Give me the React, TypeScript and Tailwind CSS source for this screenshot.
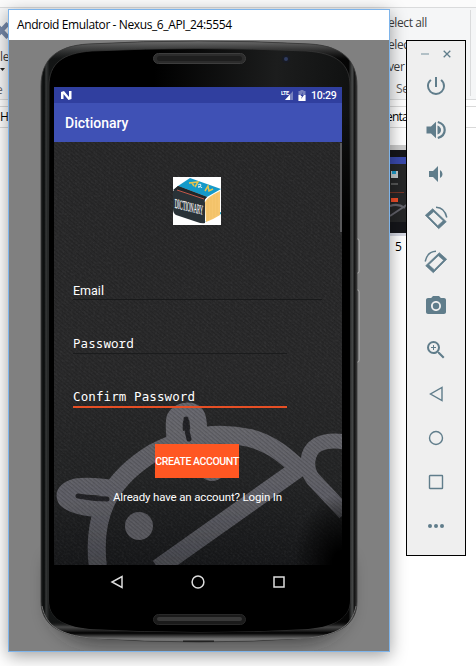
import React from "react";
import { MdPowerSettingsNew, MdVolumeDown, MdPhotoCamera, MdZoomIn } from "react-icons/md";

const ui = "font-['Open_Sans','Noto_Sans',sans-serif]";

function Desktop() {
  return (
    <div className={`relative flex h-[666px] w-[476px] flex-col overflow-hidden bg-white text-[12px] text-[#3c3c3c] ${ui}`}>
      <div className="h-[8px] border-b border-[#dadbdc] bg-[#fbfbfb]" />
      <div className="flex h-[92px] border-b border-[#dadbdc] bg-[#f5f6f7]">
        <div className="flex w-[10px] flex-col leading-[16px]">
          <svg className="mt-[14px] h-[18px] w-[8px] shrink-0" viewBox="0 0 8 18">
            <path d="M-5 1.500L8 15.500M8 1.500L-5 15.500" stroke="#7588a8" strokeWidth="4.500" />
          </svg>
          <span className="mt-[9px] tracking-[-0.3px]">le</span>
          <svg className="mt-[3px] h-[4px] w-[8px] shrink-0" viewBox="0 0 8 4"><path d="M0 0h5L2.5 3z" fill="#222" /></svg>
          <span className="-ml-1 mt-[10px] text-[#6a6a6a]">e</span>
        </div>
        <div className="ml-auto mt-[2px] flex h-[86px] w-[83px] flex-col border-r border-[#dadbdc] tracking-[-0.4px] leading-[22px]">
          <span className="mt-[2px] h-[22px] whitespace-nowrap">elect all</span>
          <span className="h-[22px]">elec</span>
          <span className="h-[22px]">ver</span>
          <span className="ml-[8px] h-[22px] text-[#5a5a5a]">Se</span>
        </div>
        <div className="w-[5px]" />
      </div>
      <div className="mt-[6px] flex h-[22px] items-center justify-between border-y border-[#d9d9d9] bg-white text-black">
        <span>H</span>
        <span className="w-[90px] tracking-[-0.8px]">enta</span>
      </div>
      <div className="ml-[389px] mt-[17px] flex w-[60px] flex-col">
        <svg className="h-[91px] w-[20px]" viewBox="389 145 20 91">
          <rect x="389" y="145" width="20" height="91" fill="#ccc" />
          <rect x="389" y="150" width="20" height="83" fill="#15161a" />
          <rect x="389" y="157" width="20" height="7" fill="#3949ab" />
          <rect x="389" y="164" width="20" height="58" fill="#252627" />
          <rect x="391" y="171" width="7" height="7" fill="#c0c8ca" />
          <rect x="392" y="171" width="4" height="3" fill="#1a9ac8" />
          <path d="M391 184h7" stroke="#888" />
          <path d="M390 192.500h14" stroke="#743526" />
          <rect x="391" y="198" width="7" height="4" fill="#ee4e29" />
          <path d="M390 216L408 204M390 206q8 -3 15 2" fill="none" stroke="#62626a" strokeWidth="2" />
          <rect x="389" y="233" width="20" height="3" fill="#d5d8e2" />
        </svg>
        <span className="ml-[6px] mt-[2px] leading-[18px] text-black">5</span>
      </div>
    </div>
  );
}

const body = "M41 86C41 59 57 46 88 44Q199 38 310 44C341 46 357 59 357 86V602C357 624 339 635 308 638Q199 646 90 638C59 635 41 624 41 602Z";
const face = "M49 86C49 64 62 53 92 51Q199 46 306 51C337 53 350 64 350 86V600C350 617 337 626 308 629Q199 635 90 629C61 626 49 617 49 600Z";

function PhoneShell() {
  return (
    <svg className="absolute left-0 top-0 h-[611px] w-[381px]" viewBox="9 40 381 611">
      <defs>
        <linearGradient id="edge" x1="0" x2="1">
          <stop offset="0" stopColor="#1c1e1e" /><stop offset=".01" stopColor="#090b0b" /><stop offset=".016" stopColor="#353737" /><stop offset=".027" stopColor="#131515" />
          <stop offset=".973" stopColor="#050505" /><stop offset=".985" stopColor="#484a4a" /><stop offset=".992" stopColor="#151515" /><stop offset="1" stopColor="#333" />
        </linearGradient>
        <linearGradient id="gloss" x1="0" x2="1" y1="0" y2=".12">
          <stop offset=".35" stopColor="#000" /><stop offset=".75" stopColor="#1c1d1d" /><stop offset="1" stopColor="#101111" />
        </linearGradient>
        <linearGradient id="gloss2" x1="0" x2="0" y1="0" y2="1">
          <stop offset=".1" stopColor="#000" stopOpacity="0" /><stop offset=".3" stopColor="#000" />
        </linearGradient>
        <linearGradient id="caps" x1="0" x2="0" y1="0" y2="1">
          <stop offset="0" stopColor="#777" stopOpacity=".9" /><stop offset=".03" stopColor="#555" stopOpacity="0" />
          <stop offset=".965" stopColor="#000" stopOpacity="0" /><stop offset=".975" stopColor="#555" stopOpacity=".8" /><stop offset=".985" stopColor="#000" /><stop offset=".995" stopColor="#777" />
        </linearGradient>
        <filter id="soft" x="-20%" y="-20%" width="140%" height="140%"><feGaussianBlur stdDeviation="9" /></filter>
      </defs>
      <path d="M50 560H348V610Q340 640 300 643H98Q58 640 50 610Z" fill="#222" opacity=".6" filter="url(#soft)" />
      <path d="M356 239h2q1 0 1 2v30q0 2-1 2h-2M356 290h2q1 0 1 2v68q0 2-1 2h-2" fill="#555" stroke="#c2c2c2" strokeWidth=".8" />
      <path d={body} fill="url(#edge)" />
      <path d={body} fill="url(#caps)" stroke="#393939" strokeWidth=".8" />
      <path d={face} fill="url(#gloss)" stroke="#3b3b3b" strokeWidth=".7" />
      <path d={face} fill="url(#gloss2)" />
      <path d="M42 606C46 627 62 635 90 638Q199 643 308 638C336 635 352 627 356 606" fill="none" stroke="#6f6f6f" strokeWidth="1" />
      <rect x="183" y="640.500" width="31" height="1.500" fill="#222" />
      <rect x="153.500" y="53.500" width="92" height="10" rx="5" fill="#2c2c2c" stroke="#3d3d3d" /><rect x="157" y="56" width="85" height="5" rx="2.500" fill="#1e1e1e" />
      <rect x="153.500" y="614.500" width="92" height="10" rx="5" fill="#1b1b1b" stroke="#292929" /><rect x="157" y="617" width="85" height="4" rx="2" fill="#393939" />
      <circle cx="286" cy="59" r="4" fill="#181b24" /><circle cx="286" cy="59" r="2" fill="#303c60" />
    </svg>
  );
}

function Wallpaper() {
  return (
    <svg className="absolute inset-0 h-full w-full" viewBox="54 142 288 423">
      <defs>
        <linearGradient id="cloth" x1="0" x2="0" y1="0" y2="1">
          <stop offset="0" stopColor="#29292a" /><stop offset=".55" stopColor="#2a2a2b" /><stop offset=".8" stopColor="#242526" /><stop offset="1" stopColor="#17181a" />
        </linearGradient>
        <pattern id="weave" width="3" height="3" patternUnits="userSpaceOnUse" patternTransform="rotate(40)">
          <rect width="3" height="1.200" fill="#000" opacity=".16" />
        </pattern>
        <filter id="grain" x="0" y="0" width="100%" height="100%">
          <feTurbulence type="fractalNoise" baseFrequency=".45" numOctaves="2" seed="4" />
          <feColorMatrix values="0 0 0 0 .6  0 0 0 0 .6  0 0 0 0 .62  .9 0 0 0 -.36" />
        </filter>
        <linearGradient id="thread" x1="0" x2="0" y1="400" y2="565" gradientUnits="userSpaceOnUse">
          <stop offset="0" stopColor="#6a6a70" /><stop offset=".6" stopColor="#606067" /><stop offset="1" stopColor="#46474d" />
        </linearGradient>
        <radialGradient id="corner" cx="1" cy="1" r=".17"><stop offset=".2" stopColor="#000" /><stop offset="1" stopColor="#000" stopOpacity="0" /></radialGradient>
        <filter id="fuzz"><feGaussianBlur stdDeviation=".7" /></filter>
      </defs>
      <rect x="54" y="142" width="288" height="423" fill="url(#cloth)" />
      <g filter="url(#fuzz)" fill="none" stroke="url(#thread)" strokeWidth="18" strokeLinejoin="round">
        <path d="M98 568C90 505 119 474 153 453C190 433 224 432 250 438C275 445 288 458 303 472" />
        <path d="M302 466L158 568" />
        <path d="M114 489Q92 485 76 487Q62 491 66 499Q74 508 105 509" strokeWidth="17" />
        <path d="M176 445Q173 425 175 418Q179 411 188 411Q197 411 198 421L200 440" strokeWidth="17" />
        <path d="M345 442Q328 439 317 445C306 452 305 469 313 479L345 513" strokeWidth="15" />
        <path d="M78 496Q93 499 107 499" stroke="#242427" strokeWidth="5" strokeLinecap="round" />
        <path d="M186 419Q186 428 189 439" stroke="#242427" strokeWidth="5" strokeLinecap="round" />
        <circle cx="139" cy="526" r="14" fill="#5a5a60" stroke="none" />
        <circle cx="212" cy="467" r="14" fill="#626268" stroke="none" />
      </g>
      <rect x="54" y="142" width="288" height="423" filter="url(#grain)" opacity=".14" />
      <rect x="54" y="142" width="288" height="423" fill="url(#weave)" />
      <rect x="54" y="142" width="288" height="423" fill="url(#corner)" />
      <rect x="340" y="143" width="2" height="89" fill="#59595b" />
    </svg>
  );
}

function BookLogo() {
  return (
    <svg className="h-12 w-12" viewBox="0 0 48 48">
      <rect width="48" height="48" fill="#fff" />
      <path d="M32 45L48 37V35L38 38Z" fill="#29a3bf" />
      <path d="M32 25Q34 20 47 14V38Q41 42 33 45Z" fill="#f6c66f" />
      <path d="M35 23v20M38 20v22M41 18v22M44 16v22" stroke="#e9b85f" strokeWidth=".5" />
      <path d="M17 1L48 12L34 20L5 9Z" fill="#159ac9" />
      <path d="M5 9L34 20Q31 22 32 26V46Q29 47 24 45L3 38Q0 36 0 32V14Z" fill="#293237" />
      <path d="M0 13L5 9L34 20L32 22L4 13Z" fill="#20272a" />
      <path d="M4 13L31 22" stroke="#d45b4b" strokeWidth=".9" />
      <path d="M16 6L25 5L22 10M19 6l2 3M32 14l3-5l1 5l4-2" fill="none" stroke="#e6c34d" strokeWidth="1.500" />
      <path d="M25 8q3-2 3 0t-3 2q4-1 4 1" fill="none" stroke="#d7edf5" />
      <text x="1.700" y="30.300" transform="matrix(1 .25 0 1 0 0)" textLength="28.500" lengthAdjust="spacingAndGlyphs" fill="#fff" stroke="#fff" strokeWidth=".2" fontFamily="Liberation Serif, serif" fontSize="13.500">DICTIONARY</text>
    </svg>
  );
}

function Screen() {
  return (
    <div className="relative ml-[45px] mt-[47px] flex h-[514px] w-[288px] flex-col bg-black font-['Roboto',sans-serif] text-white">
      <div className="flex h-4 items-center bg-[#303f9f] pl-[7px] pr-[6px]">
        <svg className="h-[9px] w-[11px]" viewBox="0 0 11 9">
          <path d="M0 1L3 0L8 6V0H10.500V8L7.500 9L2.500 3V8H0Z" fill="#fff" />
        </svg>
        <svg className="ml-auto h-[12px] w-[14px]" viewBox="0 0 14 12">
          <path d="M12 2V11H4Z" fill="#7781bd" /><path d="M9 5.500V11H4Z" fill="#fff" />
          <text x="0" y="5.500" fontSize="5.500" fontWeight="700" fill="#fff" fontFamily="Roboto, sans-serif" textLength="8">LTE</text>
        </svg>
        <svg className="ml-[3px] h-[11px] w-[8px]" viewBox="0 0 8 11">
          <path d="M2.500 0h3v1h2v10h-7V1h2Z" fill="#7781bd" /><path d="M.5 5h7v6h-7Z" fill="#fff" /><path d="M5 2L2.500 6H4L3 9L6 5H4.300Z" fill="#303f9f" />
        </svg>
        <span className="ml-[5px] w-[25px] pt-px text-[10.500px] font-medium leading-4 tracking-[-0.2px]">10:29</span>
      </div>
      <div className="flex h-[39px] items-center bg-[#3f51b5] pl-[11px] pt-[2px] text-[14px] font-medium">Dictionary</div>
      <div className="relative h-[423px] overflow-hidden">
        <Wallpaper />
        <div className="relative flex flex-col pl-[19px]">
          <div className="ml-[100px] mt-[35px]"><BookLogo /></div>
          <div className="mt-[57px] h-[18px] w-[249px] border-b border-[#191a1b] text-[12.500px] leading-[17px]">Email</div>
          <div className="mt-[36px] h-[18px] w-[214px] border-b border-[#1b1c1d] font-['Noto_Sans_Mono','DejaVu_Sans_Mono',monospace] text-[12.500px] leading-[16px] tracking-[0.1px]">Password</div>
          <div className="mt-[34px] h-[20px] w-[214px] border-b-2 border-[#e64f25] font-['DejaVu_Sans_Mono',monospace] text-[12.500px] leading-[17px] tracking-[0.1px]">Confirm Password</div>
          <div className="ml-[82px] mt-[36px] flex h-[34px] w-[84px] items-center justify-center whitespace-nowrap bg-[#ff5722] pt-px text-[10.500px] font-medium tracking-[-0.4px]">CREATE ACCOUNT</div>
          <div className="ml-[40px] mt-[11px] whitespace-nowrap text-[11.500px] leading-[16px] tracking-[-0.15px]">Already have an account? Login In</div>
        </div>
      </div>
      <div className="flex h-[34px] items-center justify-between pl-[56px] pr-[56px]">
        <svg className="h-[14px] w-[14px]" viewBox="0 0 14 14"><path d="M12 1.500V12.500L2 7Z" fill="none" stroke="#ddd" strokeWidth="1.500" /></svg>
        <svg className="h-[14px] w-[14px]" viewBox="0 0 14 14"><circle cx="7" cy="7" r="5.900" fill="none" stroke="#ddd" strokeWidth="1.500" /></svg>
        <svg className="h-[14px] w-[14px]" viewBox="0 0 14 14"><path d="M2 2H12V12H2Z" fill="none" stroke="#ddd" strokeWidth="1.500" /></svg>
      </div>
    </div>
  );
}

function EmulatorWindow() {
  return (
    <div className="absolute left-[8px] top-[9px] flex h-[643px] w-[382px] flex-col border border-[#7eb4ea] bg-[#808080] shadow-[0_4px_16px_rgba(0,0,0,.38)]">
      <div className={`flex h-[30px] items-center bg-white pl-[8px] text-[12px] text-black ${ui}`}>
        <span className="whitespace-nowrap tracking-[-0.39px]">Android Emulator - Nexus_6_API_24:5554</span>
      </div>
      <div className="relative h-[611px]">
        <PhoneShell />
        <div className="flex"><Screen /></div>
      </div>
    </div>
  );
}

function RotateIcon({ flip = false }: { flip?: boolean }) {
  return (
    <svg className={flip ? "h-6 w-6 -scale-x-100" : "h-6 w-6"} viewBox="0 0 24 24">
      <path
        fillRule="evenodd"
        fill="#607d8b"
        stroke="#607d8b"
        strokeWidth=".7"
        strokeLinejoin="round"
        d="M1.300 9.300L8.700 2.700L22.300 15.700L14.700 22.700ZM4.350 10.250L13.750 19.650L19.250 14.750L9.650 5.750Z"
      />
      <path d="M12 1.300Q20.500 1.500 22.800 11.500" fill="none" stroke="#607d8b" strokeWidth="1.500" />
    </svg>
  );
}

function Toolbar() {
  const row = "flex h-11 items-center justify-center";
  return (
    <div className="absolute left-[406px] top-[40px] flex h-[516px] w-[60px] flex-col border border-black bg-[#efefef] text-[#607d8b]">
      <div className="flex h-[23px] items-center gap-[14px] pl-[14px] pt-[3px]">
        <svg className="h-2 w-2" viewBox="0 0 8 8"><path d="M0 4H8" stroke="#9eb0b8" strokeWidth="1.500" /></svg>
        <svg className="h-2 w-2" viewBox="0 0 8 8"><path d="M.7 .7L7.300 7.300M7.300 .7L.7 7.300" stroke="#607d8b" strokeWidth="1.300" /></svg>
      </div>
      <div className={row}><MdPowerSettingsNew size={24} /></div>
      <div className={row}>
        <svg className="h-6 w-6" viewBox="0 0 24 24" fill="#607d8b">
          <path d="M2.500 8.500H7L12 3.700V20.300L7 15.500H2.500Z" />
          <path d="M13.500 7.500Q17 9 17 12T13.500 16.500Z" />
          <path d="M13.800 4Q20.700 6 20.700 12T13.800 20" fill="none" stroke="#607d8b" strokeWidth="2.200" />
        </svg>
      </div>
      <div className={row}><MdVolumeDown size={24} /></div>
      <div className={row}><RotateIcon /></div>
      <div className={row}><RotateIcon flip /></div>
      <div className={row}><MdPhotoCamera size={24} /></div>
      <div className={row}><MdZoomIn size={24} /></div>
      <div className={row}><svg className="h-4 w-4" viewBox="0 0 16 16"><path d="M14 1.500V14.500L2.500 8Z" fill="none" stroke="#607d8b" strokeWidth="1.400" /></svg></div>
      <div className={row}><svg className="h-4 w-4" viewBox="0 0 16 16"><circle cx="8" cy="8" r="6.500" fill="none" stroke="#607d8b" strokeWidth="1.400" /></svg></div>
      <div className={row}><svg className="h-4 w-4" viewBox="0 0 16 16"><rect x="1.500" y="1.500" width="13" height="13" rx=".5" fill="none" stroke="#607d8b" strokeWidth="1.400" /></svg></div>
      <div className={row}><svg className="h-4 w-4" viewBox="0 0 16 16"><g fill="#607d8b"><circle cx="2" cy="8" r="2" /><circle cx="8" cy="8" r="2" /><circle cx="14" cy="8" r="2" /></g></svg></div>
    </div>
  );
}

export default function App() {
  return (
    <main className="relative h-[666px] w-[476px] overflow-hidden">
      <Desktop />
      <EmulatorWindow />
      <Toolbar />
    </main>
  );
}
